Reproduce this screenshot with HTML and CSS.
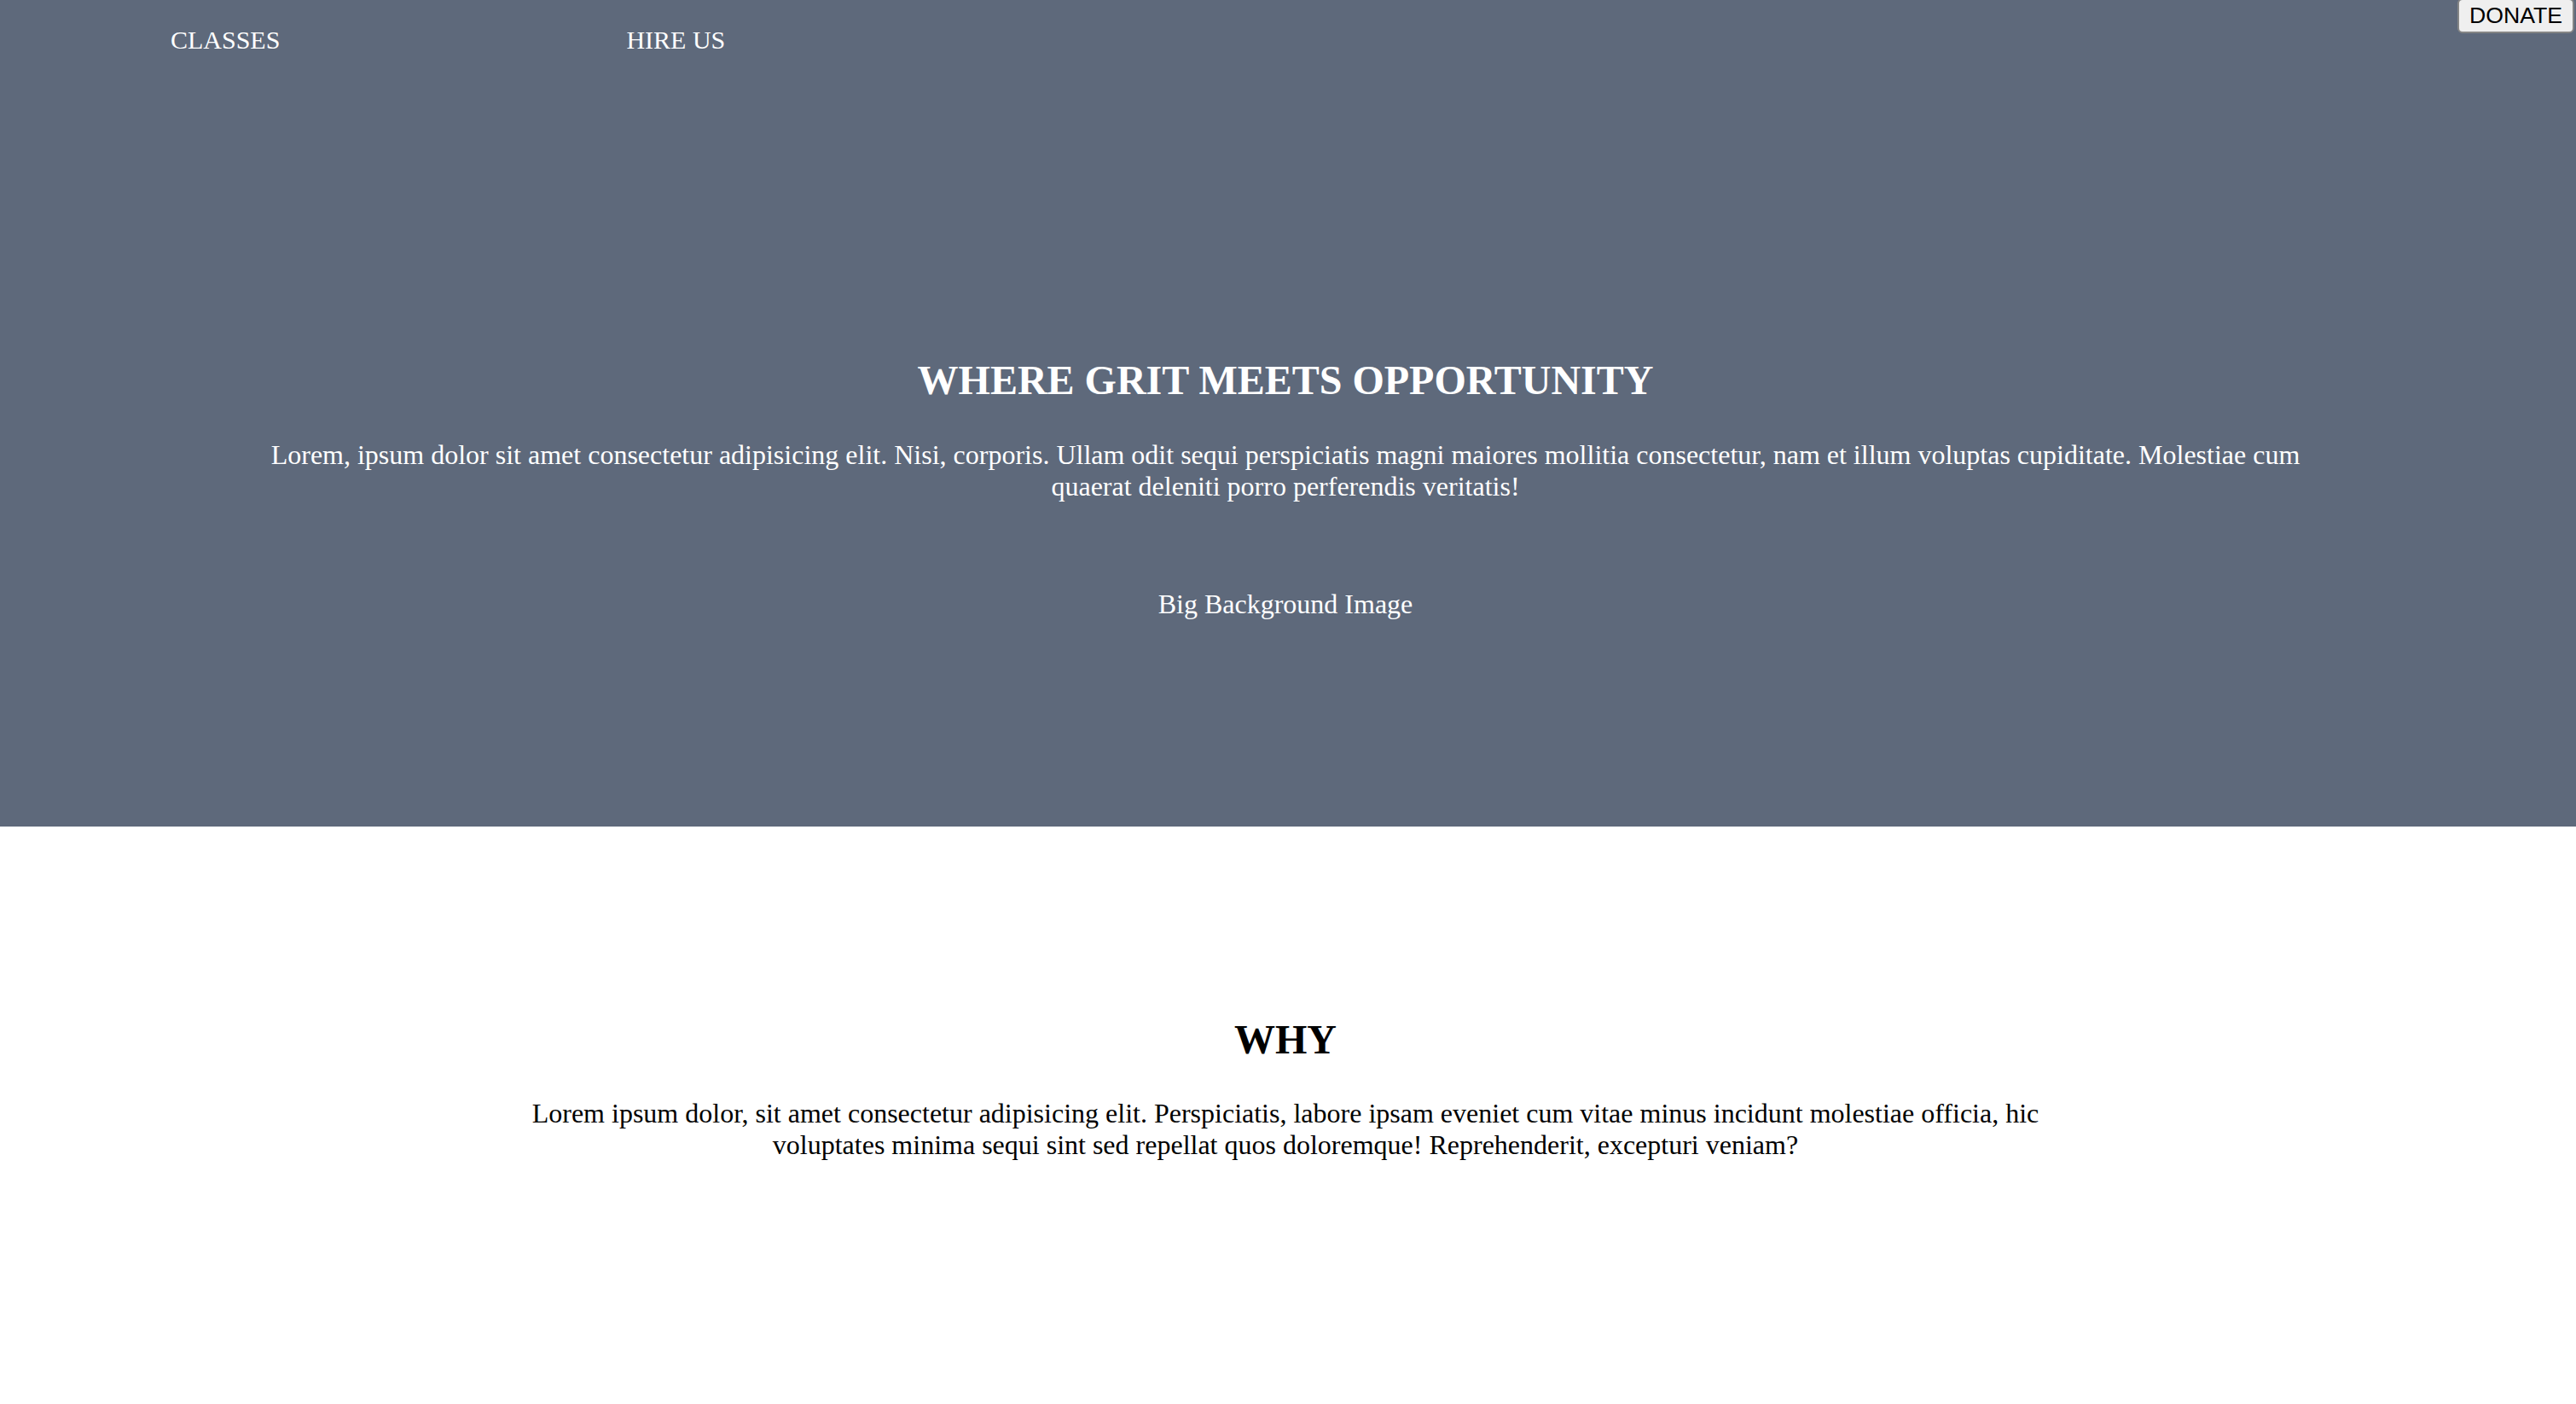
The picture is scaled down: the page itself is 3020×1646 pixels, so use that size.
FILE: index.html
```html
<!DOCTYPE html>
<html lang="en">
<head>
<meta charset="utf-8">
<title>Where Grit Meets Opportunity</title>
<link rel="stylesheet" href="styles.css">
</head>
<body>
  <header class="hero">
    <nav class="nav">
      <a class="nav-link" href="#">CLASSES</a>
      <a class="nav-link" href="#">HIRE US</a>
    </nav>
    <button class="donate" type="button">DONATE</button>
    <div class="hero-content">
      <h1 class="hero-title">WHERE GRIT MEETS OPPORTUNITY</h1>
      <p class="hero-text">Lorem, ipsum dolor sit amet consectetur adipisicing elit. Nisi, corporis. Ullam odit sequi perspiciatis magni maiores mollitia consectetur, nam et illum voluptas cupiditate. Molestiae cum quaerat deleniti porro perferendis veritatis!</p>
      <p class="hero-note">Big Background Image</p>
    </div>
  </header>
  <section class="why">
    <h2 class="why-title">WHY</h2>
    <p class="why-text">Lorem ipsum dolor, sit amet consectetur adipisicing elit. Perspiciatis, labore ipsam eveniet cum vitae minus incidunt molestiae officia, hic voluptates minima sequi sint sed repellat quos doloremque! Reprehenderit, excepturi veniam?</p>
  </section>
</body>
</html>
```

FILE: styles.css
```css
html, body {
  margin: 0;
  padding: 0;
}

body {
  font-family: "Liberation Serif", "Times New Roman", serif;
  font-size: 32px;
  color: #000;
  background: #fff;
}

.hero {
  position: relative;
  background: #5e697b;
  color: #fff;
  height: 969px;
  box-sizing: border-box;
}

.nav {
  display: flex;
  gap: 406px;
  padding: 30px 0 0 200px;
}

.nav-link {
  color: #fff;
  text-decoration: none;
  font-size: 30px;
  line-height: 34.5px;
}

.donate {
  position: absolute;
  top: -2px;
  right: 2px;
  margin: 0;
  font-family: "Liberation Sans", Arial, sans-serif;
  font-size: 26.67px;
  color: #000;
  background: #efefef;
  border: 2px solid #858585;
  border-radius: 6px;
  padding: 3px 12px;
  line-height: normal;
}

.hero-content {
  text-align: center;
  padding: 353px 6px 0 0;
}

.hero-title {
  margin: 0;
  font-size: 48px;
  font-weight: bold;
  line-height: normal;
}

.hero-text {
  width: 80%;
  margin: 42px auto 0;
  line-height: normal;
}

.hero-note {
  margin: 101px 0 0;
  line-height: normal;
}

.why {
  text-align: center;
  padding: 222px 6px 0 0;
}

.why-title {
  margin: 0;
  font-size: 48px;
  font-weight: bold;
  line-height: normal;
}

.why-text {
  max-width: 60%;
  margin: 41px auto 0;
  line-height: normal;
}
```
